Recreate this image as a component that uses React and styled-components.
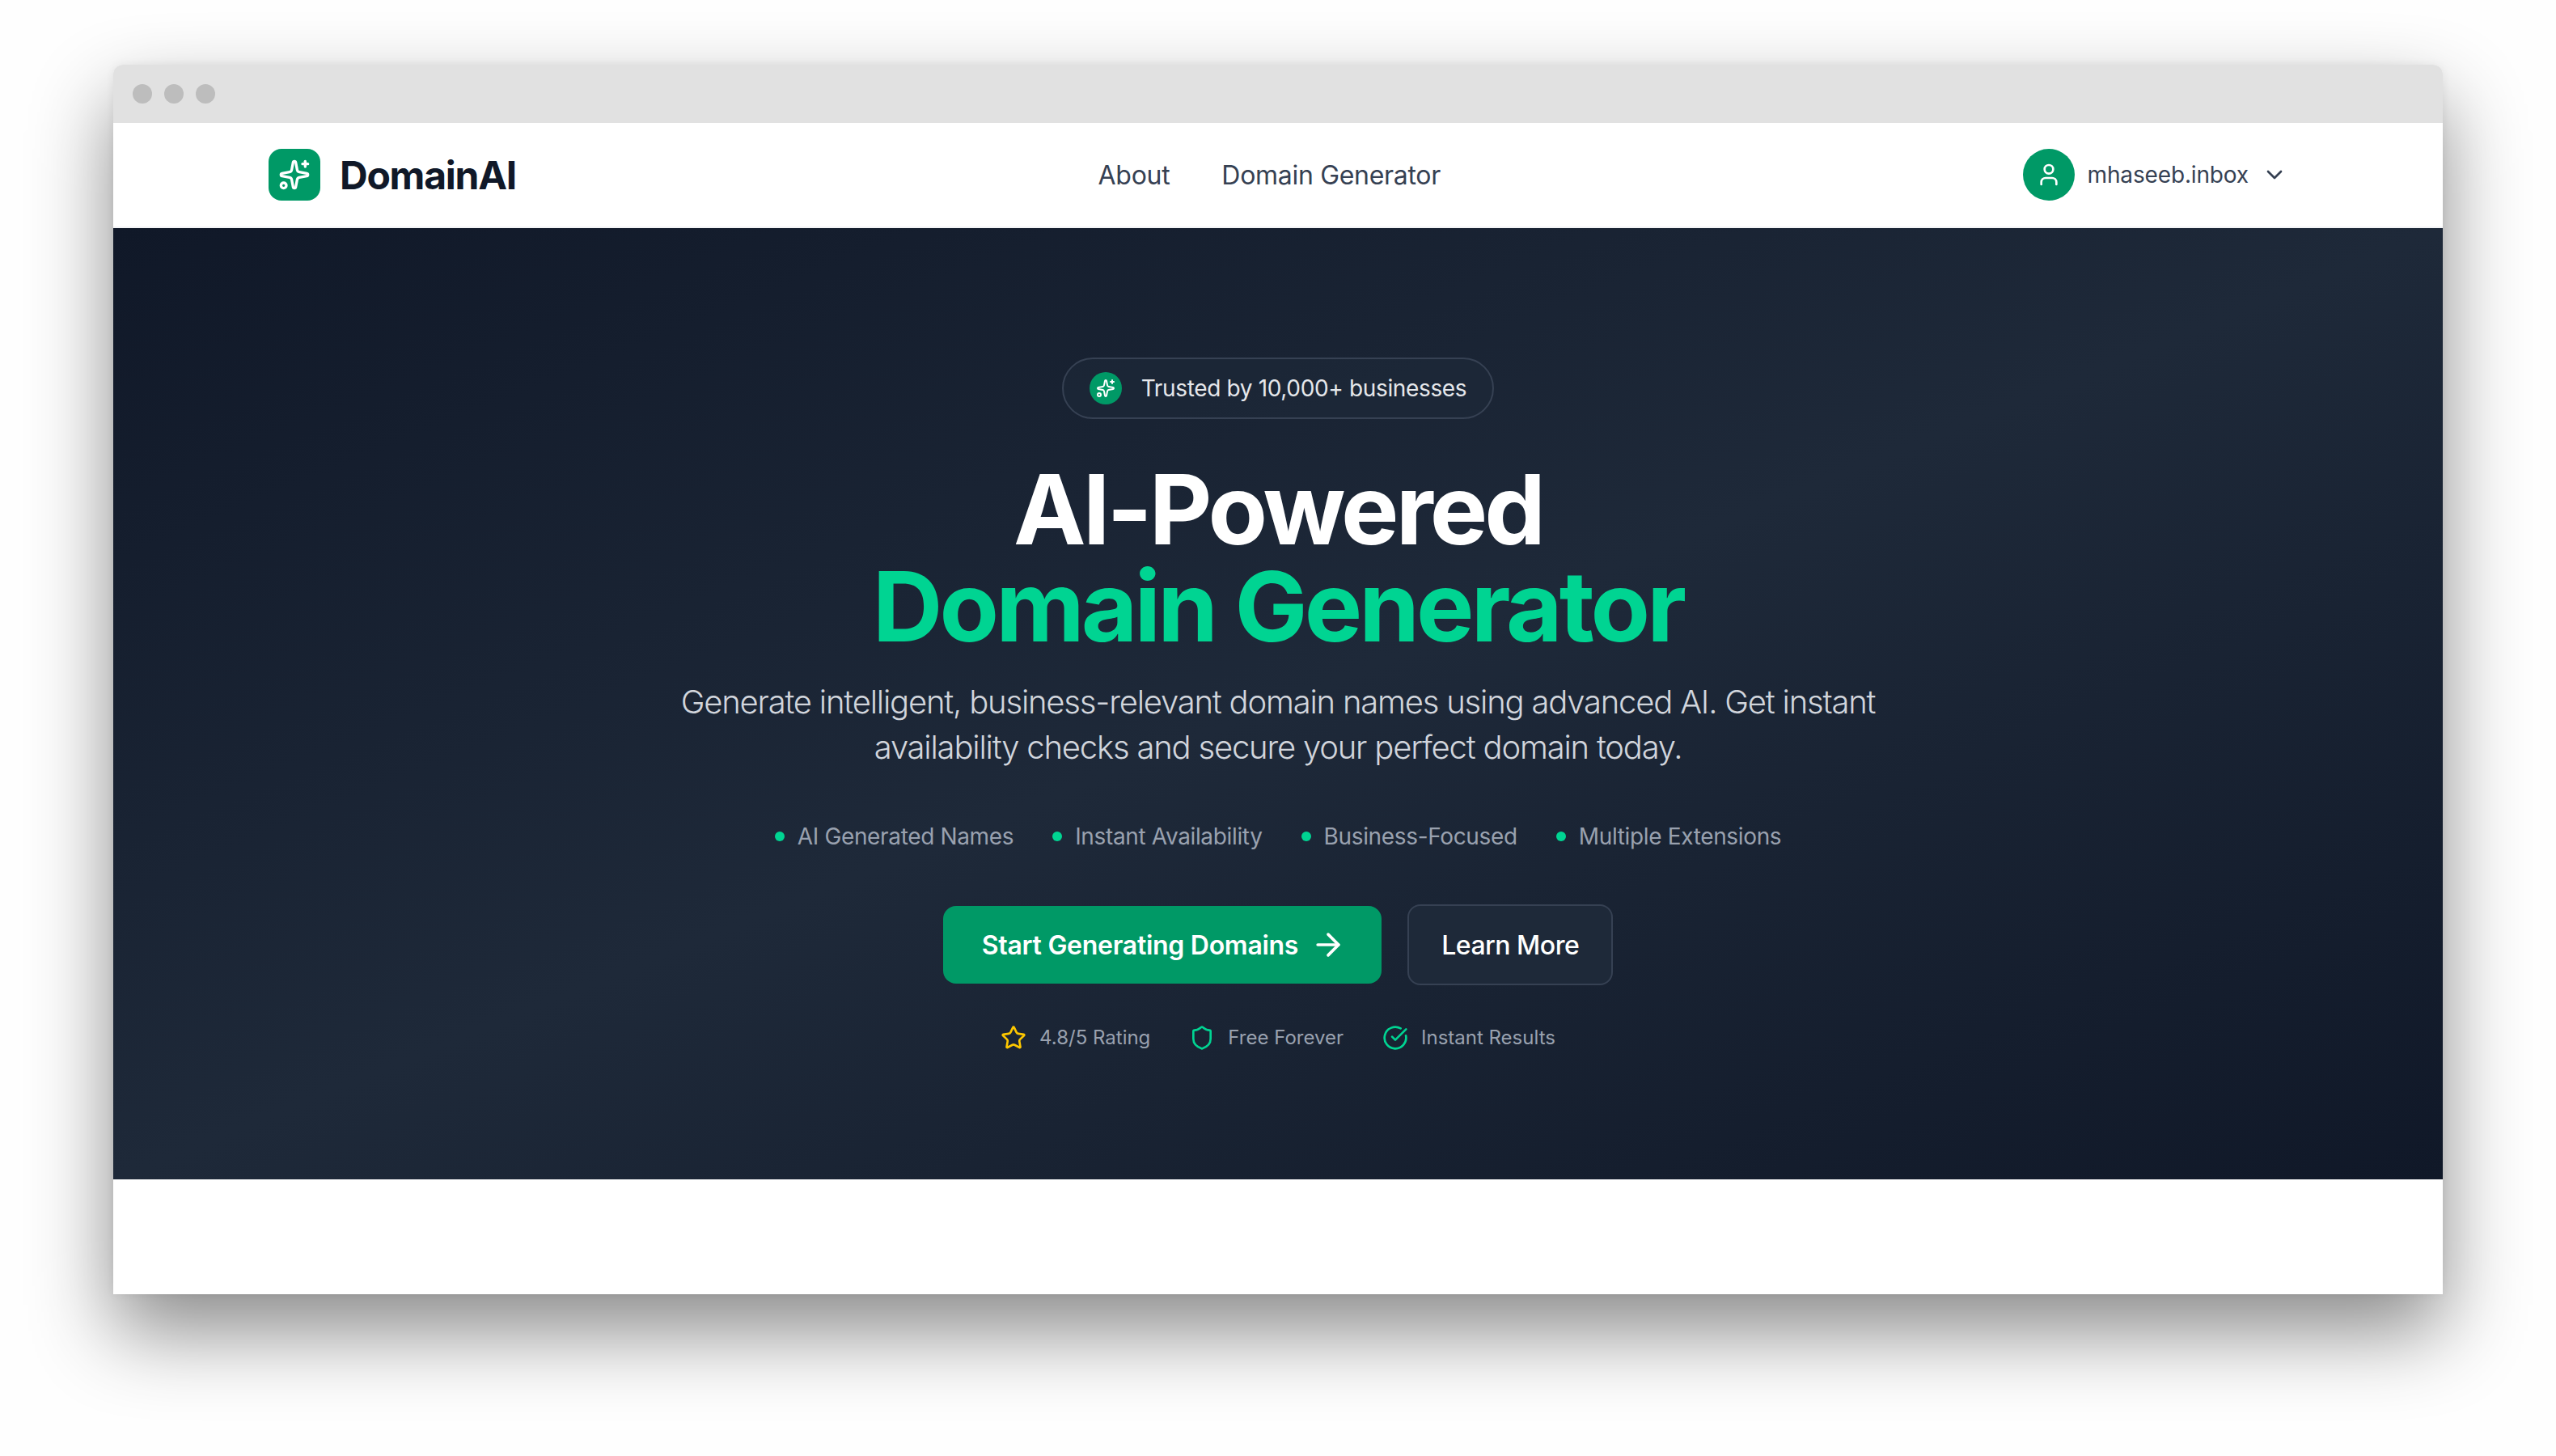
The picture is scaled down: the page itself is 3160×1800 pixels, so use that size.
import React from 'react'
import styled, { createGlobalStyle } from 'styled-components'
import { Sparkles, User, ChevronDown, ArrowRight, Star, Shield, CircleCheckBig } from 'lucide-react'

const GlobalStyle = createGlobalStyle`
  html, body {
    margin: 0;
    padding: 0;
    background: #fefefe;
  }
  * {
    box-sizing: border-box;
  }
  body {
    font-family: Inter, "Liberation Sans", sans-serif;
    -webkit-font-smoothing: antialiased;
  }
`

const Stage = styled.div`
  width: 3160px;
  height: 1800px;
  padding: 80px 140px 200px;
  overflow: hidden;
`

const Browser = styled.div`
  height: 1520px;
  display: flex;
  flex-direction: column;
  border-radius: 12px 12px 0 0;
  background: #fff;
  box-shadow: 0 46px 100px rgba(0, 0, 0, 0.46), 0 0 12px rgba(0, 0, 0, 0.06);
`

const TitleBar = styled.div`
  flex: 0 0 72px;
  display: flex;
  align-items: center;
  gap: 15px;
  padding-left: 24px;
  background: #e1e1e1;
  border-radius: 12px 12px 0 0;
`

const Dot = styled.span`
  width: 24px;
  height: 24px;
  border-radius: 50%;
  background: #bdbdbd;
`

const Nav = styled.nav`
  flex: 0 0 130px;
  display: flex;
  align-items: center;
  justify-content: space-between;
  padding: 0 192px;
  background: #fff;
  border-bottom: 2px solid #f3f4f6;
`

const Brand = styled.div`
  display: flex;
  align-items: center;
  gap: 24px;
`

const LogoMark = styled.div`
  width: 64px;
  height: 64px;
  display: flex;
  align-items: center;
  justify-content: center;
  border-radius: 16px;
  background: #009966;
  color: #fff;
`

const BrandName = styled.span`
  padding-top: 2px;
  font-size: 48px;
  line-height: 64px;
  font-weight: 700;
  letter-spacing: -1.25px;
  color: #101828;
`

const NavLinks = styled.div`
  display: flex;
  gap: 64px;
`

const NavLink = styled.a`
  padding-top: 2px;
  font-size: 32px;
  line-height: 48px;
  font-weight: 400;
  letter-spacing: -0.3px;
  color: #364153;
`

const UserMenu = styled.div`
  display: flex;
  align-items: center;
  color: #364153;
`

const Avatar = styled.div`
  width: 64px;
  height: 64px;
  margin-right: 16px;
  display: flex;
  align-items: center;
  justify-content: center;
  border-radius: 50%;
  background: #009966;
  color: #fff;
`

const UserName = styled.span`
  margin-right: 16px;
  font-size: 28px;
  line-height: 40px;
  font-weight: 400;
  letter-spacing: -0.15px;
`

const Hero = styled.section`
  flex: 0 0 1176px;
  display: flex;
  flex-direction: column;
  align-items: center;
  padding-top: 160px;
  background: linear-gradient(to bottom right, #101828, #1e2939, #101828);
`

const Badge = styled.div`
  height: 76px;
  display: flex;
  align-items: center;
  gap: 24px;
  padding: 0 32px;
  border: 2px solid #364153;
  border-radius: 38px;
  background: rgba(30, 41, 57, 0.5);
`

const BadgeIcon = styled.div`
  width: 40px;
  height: 40px;
  display: flex;
  align-items: center;
  justify-content: center;
  border-radius: 50%;
  background: #009966;
  color: #fff;
`

const BadgeText = styled.span`
  font-size: 28px;
  line-height: 40px;
  font-weight: 400;
  letter-spacing: -0.35px;
  color: #e5e7eb;
`

const Title = styled.h1`
  margin: 52px 0 30px;
  font-size: 120px;
  line-height: 120px;
  font-weight: 700;
  letter-spacing: -3.9px;
  text-align: center;
  color: #fff;
`

const TitleAccent = styled.span`
  display: block;
  color: #00d492;
`

const Lead = styled.p`
  width: 1536px;
  margin: 0 0 62px;
  font-size: 40px;
  line-height: 56px;
  font-weight: 300;
  letter-spacing: -1.2px;
  text-align: center;
  color: #d1d5dc;
`

const Features = styled.ul`
  display: flex;
  gap: 48px;
  margin: 0 0 64px;
  padding: 0;
  list-style: none;
`

const Feature = styled.li`
  display: flex;
  align-items: center;
  gap: 16px;
  font-size: 28px;
  line-height: 40px;
  letter-spacing: -0.35px;
  color: #99a1af;
`

const Bullet = styled.span`
  width: 12px;
  height: 12px;
  border-radius: 50%;
  background: #00d492;
`

const Actions = styled.div`
  display: flex;
  align-items: center;
  gap: 32px;
  margin-bottom: 49px;
`

const PrimaryButton = styled.button`
  height: 96px;
  display: flex;
  align-items: center;
  gap: 15px;
  padding: 0 44px 0 48px;
  border: 0;
  border-radius: 16px;
  background: #009966;
  color: #fff;
  font: 600 32px Inter, sans-serif;
  letter-spacing: -0.28px;
`

const SecondaryButton = styled.button`
  height: 100px;
  padding: 0 40px;
  border: 2px solid #364153;
  border-radius: 16px;
  background: #1e2939;
  color: #fff;
  font: 500 32px Inter, sans-serif;
  letter-spacing: -0.5px;
`

const Trust = styled.div`
  display: flex;
  gap: 48px;
`

const TrustItem = styled.div`
  display: flex;
  align-items: center;
  gap: 16px;
  font-size: 24px;
  line-height: 32px;
  color: #99a1af;
`

const features = ['AI Generated Names', 'Instant Availability', 'Business-Focused', 'Multiple Extensions']

const App = () => {
  return (
    <>
      <GlobalStyle />
      <Stage>
        <Browser>
          <TitleBar>
            <Dot />
            <Dot />
            <Dot />
          </TitleBar>
          <Nav>
            <Brand>
              <LogoMark>
                <Sparkles size={40} />
              </LogoMark>
              <BrandName>DomainAI</BrandName>
            </Brand>
            <NavLinks>
              <NavLink>About</NavLink>
              <NavLink>Domain Generator</NavLink>
            </NavLinks>
            <UserMenu>
              <Avatar>
                <User size={32} />
              </Avatar>
              <UserName>mhaseeb.inbox</UserName>
              <ChevronDown size={32} />
            </UserMenu>
          </Nav>
          <Hero>
            <Badge>
              <BadgeIcon>
                <Sparkles size={24} />
              </BadgeIcon>
              <BadgeText>Trusted by 10,000+ businesses</BadgeText>
            </Badge>
            <Title>
              AI-Powered
              <TitleAccent>Domain Generator</TitleAccent>
            </Title>
            <Lead>
              Generate intelligent, business-relevant domain names using advanced AI. Get instant
              availability checks and secure your perfect domain today.
            </Lead>
            <Features>
              {features.map((name) => (
                <Feature key={name}>
                  <Bullet />
                  {name}
                </Feature>
              ))}
            </Features>
            <Actions>
              <PrimaryButton>
                Start Generating Domains
                <ArrowRight size={44} />
              </PrimaryButton>
              <SecondaryButton>Learn More</SecondaryButton>
            </Actions>
            <Trust>
              <TrustItem>
                <Star size={32} color="#fdc700" />
                4.8/5 Rating
              </TrustItem>
              <TrustItem>
                <Shield size={32} color="#00d492" />
                Free Forever
              </TrustItem>
              <TrustItem>
                <CircleCheckBig size={32} color="#00d492" />
                Instant Results
              </TrustItem>
            </Trust>
          </Hero>
        </Browser>
      </Stage>
    </>
  )
}

export default App
